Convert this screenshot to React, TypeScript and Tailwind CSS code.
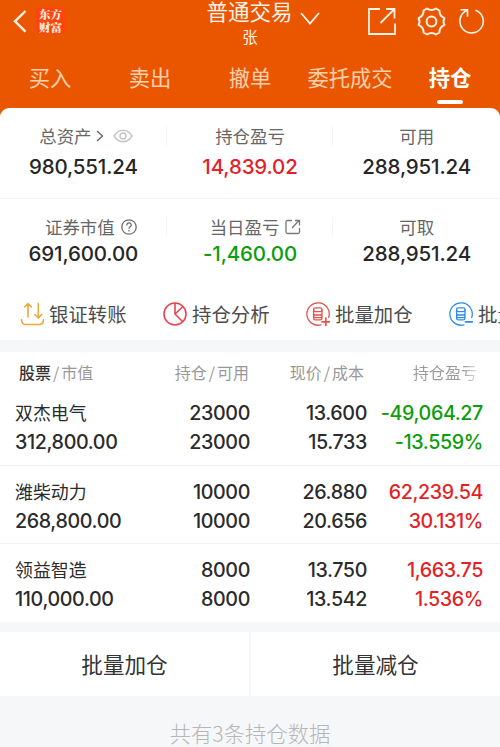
import type { ReactNode } from "react";

const tabs = ["买入", "卖出", "撤单", "委托成交", "持仓"];

const holdings = [
  { name: "双杰电气", value: "312,800.00", held: "23000", usable: "23000", price: "13.600", cost: "15.733", profit: "-49,064.27", rate: "-13.559%", up: false },
  { name: "潍柴动力", value: "268,800.00", held: "10000", usable: "10000", price: "26.880", cost: "20.656", profit: "62,239.54", rate: "30.131%", up: true },
  { name: "领益智造", value: "110,000.00", held: "8000", usable: "8000", price: "13.750", cost: "13.542", profit: "1,663.75", rate: "1.536%", up: true },
];

function Header() {
  return (
    <header className="h-[116px] bg-[#ea5600] text-[#fff3e8]">
      <div className="flex h-[49px] justify-between">
        <div className="flex w-[180px] pt-[7px] pl-3">
          <svg className="h-7 w-4" viewBox="0 0 16 28" fill="none" stroke="currentColor" strokeWidth="2.4">
            <path d="M13.500 4 3 14.300l10.500 10.300" />
          </svg>
          <div className="ml-2 flex h-[27px] w-[29px] flex-col items-center justify-center rounded-[5px] bg-[#ff4410] font-['Noto_Serif_CJK_SC','Noto_Sans_CJK_SC',serif] text-[11.5px] leading-[13px] font-black">
            <span>东方</span>
            <span>财富</span>
          </div>
        </div>
        <div className="flex w-[140px] flex-col items-center">
          <div className="flex h-[22px] items-start pl-[26px]">
            <span className="text-[21.5px] leading-[22px] whitespace-nowrap">普通交易</span>
            <svg className="mt-[11px] ml-[7px] h-4 w-5 shrink-0" viewBox="0 0 20 16" fill="none" stroke="currentColor" strokeWidth="1.8">
              <path d="m1 2 9 10.500 9-10.500" />
            </svg>
          </div>
          <span className="mt-1 text-[15.5px] leading-5">张</span>
        </div>
        <div className="flex w-[180px] justify-end pt-[7px] pr-[15px]">
          <svg className="h-[29px] w-[28px]" viewBox="0 0 28 29" fill="none" stroke="currentColor" strokeWidth="1.8">
            <path d="M12 2H1v25h26V16.500M12.500 16 26 2.500M18 2h8.500v9.500" />
          </svg>
          <svg className="ml-[21px] h-[29px] w-[29px]" viewBox="0 0 29 29" fill="none" stroke="currentColor" strokeWidth="2" strokeLinejoin="round">
            <path d="M10 1.500q4.500 3.200 9 0l3.400 2q-.1 5.300 5 7.700-1.800 3.300 0 6.600-5.100 2.400-5 7.700l-3.400 2q-4.500-3.200-9 0l-3.400-2q.1-5.300-5-7.700 1.800-3.300 0-6.600 5.100-2.400 5-7.700z" />
            <circle cx="14.500" cy="14.500" r="4.900" />
          </svg>
          <svg className="ml-[12px] h-[29px] w-[27px]" viewBox="0 0 27 29" fill="none" stroke="currentColor" strokeWidth="1.600">
            <path d="M17.500 3.200A11.700 11.700 0 1 1 8.700 3.600M2.500 2.800h7v7" />
          </svg>
        </div>
      </div>
      <nav className="grid h-[55px] grid-cols-5 text-[21.300px] leading-[56px]">
        {tabs.map((tab) =>
          tab === "持仓" ? (
            <div key={tab} className="flex flex-col items-center font-bold text-white">
              <span className="h-[51px]">{tab}</span>
              <i className="h-1 w-[26px] rounded-full bg-white" />
            </div>
          ) : (
            <div key={tab} className="text-center whitespace-nowrap text-[#ffd0ad]">{tab}</div>
          ),
        )}
      </nav>
    </header>
  );
}

function Stat({ label, value, color = "text-[#262626]", icon, divided, indent = "" }: { label: string; value: string; color?: string; icon?: ReactNode; divided?: boolean; indent?: string }) {
  return (
    <div className="relative flex flex-col items-center justify-between">
      <div className={`flex h-7 items-center text-[17.400px] leading-7 text-[#666] ${indent}`}>
        <span>{label}</span>
        {icon}
      </div>
      <span className={`font-[Inter,sans-serif] text-[20.500px] leading-[26px] font-[540] tracking-[-0.15px] ${color}`}>{value}</span>
      {divided && <i className="absolute top-1 right-0 h-5 w-px bg-[#f6f6f6]" />}
    </div>
  );
}

function Summary() {
  return (
    <section className="-mt-2 h-[180px] rounded-t-[9px] bg-white">
      <div className="grid h-[91px] grid-cols-3 border-b border-[#f4f4f4] pt-[14px] pb-[18px]">
        <Stat
          divided
          indent="pl-[6px]"
          label="总资产"
          value="980,551.24"
          icon={
            <>
              <svg className="ml-1 h-3.5 w-2.5" viewBox="0 0 10 14" fill="none" stroke="#666" strokeWidth="1.400">
                <path d="m2 2 5.500 5L2 12" />
              </svg>
              <svg className="ml-2 h-3.5 w-5" viewBox="0 0 20 14" fill="none" stroke="#c4c4c4" strokeWidth="1.400">
                <path d="M1 7C6-.7 14-.7 19 7 14 14.700 6 14.700 1 7Z" />
                <circle cx="10" cy="7" r="3" />
              </svg>
            </>
          }
        />
        <Stat divided label="持仓盈亏" value="14,839.02" color="text-[#e31f28]" />
        <Stat label="可用" value="288,951.24" />
      </div>
      <div className="grid h-[68px] grid-cols-3 pt-[14px]">
        <Stat
          divided
          indent="pl-[15px]"
          label="证券市值"
          value="691,600.00"
          icon={
            <svg className="ml-1.5 h-4 w-4" viewBox="0 0 16 16" fill="none" stroke="#707070" strokeWidth="1.300">
              <circle cx="8" cy="8" r="7.200" />
              <path d="M5.700 6.400C5.700 3 10.400 3.300 10.300 6.100 10.300 7.900 8 7.800 8 9.800M8 11v1.400" />
            </svg>
          }
        />
        <Stat
          divided
          indent="pl-[11px]"
          label="当日盈亏"
          value="-1,460.00"
          color="text-[#0b9d0b]"
          icon={
            <svg className="ml-[6px] h-4 w-4" viewBox="0 0 16 16" fill="none" stroke="#777" strokeWidth="1.300">
              <path d="M7 1.500H2.500Q1 1.500 1 3v10q0 1.500 1.500 1.500H13q1.500 0 1.500-1.500V9M7 9l7-7.500M10 1.500h4.500v5" />
            </svg>
          }
        />
        <Stat label="可取" value="288,951.24" />
      </div>
    </section>
  );
}

function Coins({ color, minus }: { color: string; minus?: boolean }) {
  return (
    <svg className="h-6 w-6 shrink-0" viewBox="0 0 24 24" fill="none" stroke={color} strokeWidth="1.300" strokeLinecap="round">
      <path d="M22.700 15.500A11.200 11.200 0 1 0 15 22.800" />
      <rect x="7.600" y="5.800" width="8.400" height="3.900" rx="1.700" />
      <path d="M7.600 8v8.200q0 1.600 1.700 1.600h5q1.700 0 1.700-1.600V8M7.600 11.800q.5 1.200 1.700 1.200h5q1.200 0 1.700-1.200M7.600 14.500q.5 1.200 1.700 1.200h5q1.200 0 1.700-1.200" />
      <path strokeWidth="1.700" d={minus ? "M16.500 19.800h7" : "M16 19.800h7.500M19.800 16v7.500"} />
    </svg>
  );
}

function Tool({ icon, label }: { icon: ReactNode; label: string }) {
  return (
    <div className="flex w-[143px] shrink-0 items-center gap-[5px] text-[19.400px] leading-8 whitespace-nowrap text-[#4c4c4c]">
      {icon}
      <span>{label}</span>
    </div>
  );
}

function Tools() {
  return (
    <section className="flex h-[52px] items-center overflow-hidden bg-white pl-[20px]">
      <Tool
        label="银证转账"
        icon={
          <svg className="h-6 w-6 shrink-0" viewBox="0 0 24 24" fill="none" stroke="#eda83e" strokeWidth="1.600" strokeLinecap="round" strokeLinejoin="round">
            <path d="M1.500 17.500c0 3.500 1.500 5 4.500 5h13c3 0 4.500-1.500 4.500-5M8 15V1.500L4.500 5M8 1.500 11.500 5M18.300 1.500V16l-3.500-3.500M18.300 16l3.500-3.500" />
          </svg>
        }
      />
      <Tool
        label="持仓分析"
        icon={
          <svg className="h-6 w-6 shrink-0" viewBox="0 0 24 24" fill="none" stroke="#e94350" strokeWidth="1.600">
            <circle cx="12" cy="12" r="11" />
            <path d="M12 1v11l8 8M12 12l8-7.500" />
          </svg>
        }
      />
      <Tool label="批量加仓" icon={<Coins color="#e4534c" />} />
      <Tool label="批量减仓" icon={<Coins color="#318bea" minus />} />
    </section>
  );
}

function Holdings() {
  return (
    <section className="mt-3 h-[270px] bg-white">
      <div className="grid h-[35px] grid-cols-[250px_117px_133px] text-[16px] leading-[41px] text-[#999]">
        <div className="grid grid-cols-2">
          <span className="pl-[19px]"><b className="font-medium text-[#333]">股票</b><span className="px-0.5">/</span>市值</span>
          <span className="pr-px text-right">持仓<span className="px-[2px]">/</span>可用</span>
        </div>
        <span className="pr-[3px] text-right">现价<span className="px-[2px]">/</span>成本</span>
        <span className="bg-linear-to-r from-[#999] from-72% to-[#ececec] to-84% bg-clip-text pr-[23px] text-right text-transparent">持仓盈亏</span>
      </div>
      {holdings.map((h) => (
        <div key={h.name} className="grid h-[78.500px] grid-cols-[125px_125px_117px_116px] border-b border-[#f3f3f3] pt-[12px] font-[Inter,sans-serif] text-[19.700px] leading-[29px] font-[550] tracking-[-0.38px] text-[#2b2b2b] last:border-0">
          <div>
            <div className="h-[29px] pl-[15px] font-['Noto_Sans_CJK_SC',sans-serif] text-[17.900px] leading-[26px] font-normal tracking-normal">{h.name}</div>
            <div className="pl-[15px]">{h.value}</div>
          </div>
          <div className="text-right"><div>{h.held}</div><div>{h.usable}</div></div>
          <div className="text-right"><div>{h.price}</div><div>{h.cost}</div></div>
          <div className={`text-right ${h.up ? "text-[#e31f28]" : "text-[#0b9d0b]"}`}><div>{h.profit}</div><div>{h.rate}</div></div>
        </div>
      ))}
    </section>
  );
}

export default function App() {
  return (
    <main className="h-[747px] w-[500px] overflow-hidden bg-[#f6f7f9] font-['Noto_Sans_CJK_SC',sans-serif]">
      <Header />
      <Summary />
      <Tools />
      <Holdings />
      <div className="mt-[10px] grid h-[64px] grid-cols-2 gap-[2px] text-center text-[21.600px] leading-[64px] text-[#333]">
        <span className="bg-white">批量加仓</span>
        <span className="bg-white">批量减仓</span>
      </div>
      <p className="pt-[21px] text-center text-[21.300px] leading-8 font-light text-[#b5b6b8]">共有3条持仓数据</p>
    </main>
  );
}
